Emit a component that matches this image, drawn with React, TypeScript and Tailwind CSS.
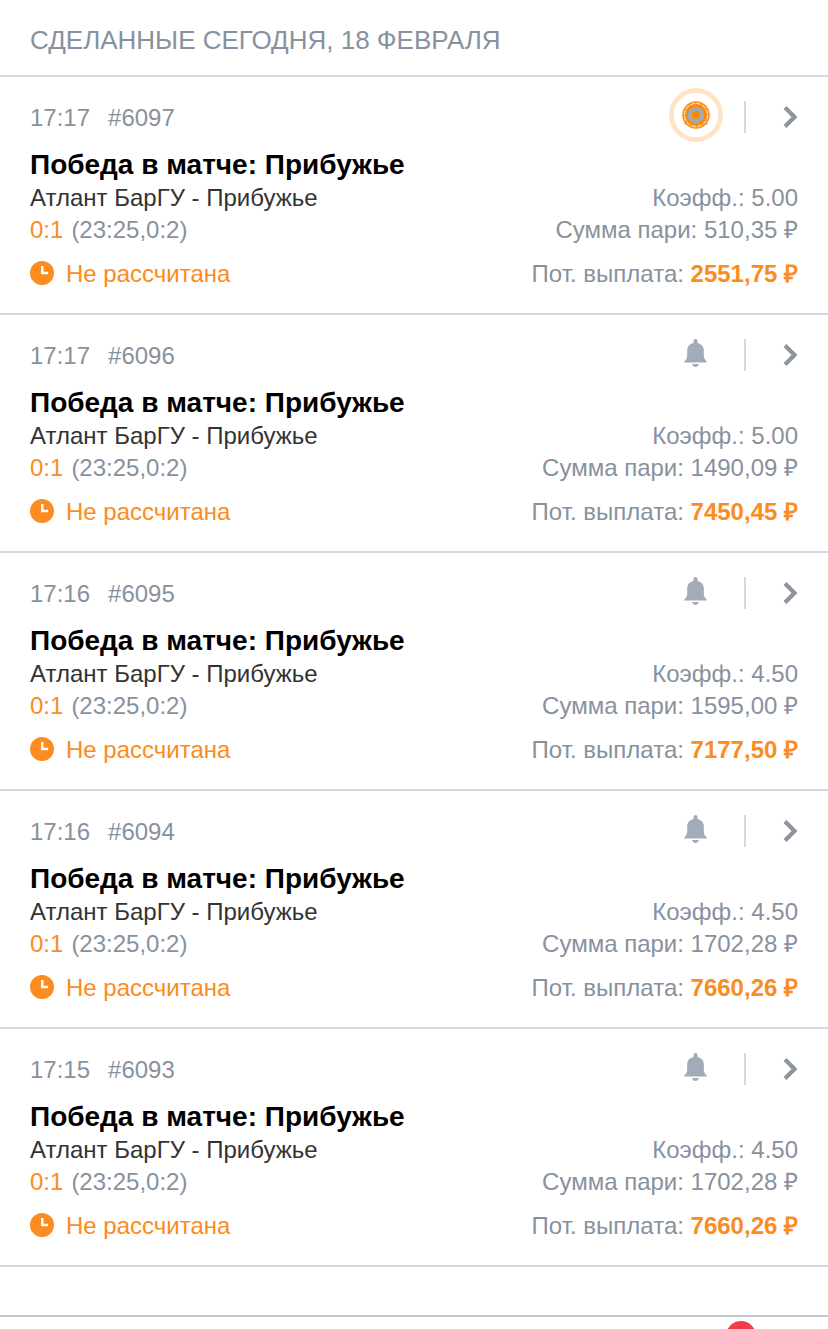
type Bet = {
  time: string;
  id: string;
  odds: string;
  stake: string;
  payout: string;
  live?: boolean;
};

const bets: Bet[] = [
  { time: "17:17", id: "6097", odds: "5.00", stake: "510,35 ₽", payout: "2551,75 ₽", live: true },
  { time: "17:17", id: "6096", odds: "5.00", stake: "1490,09 ₽", payout: "7450,45 ₽" },
  { time: "17:16", id: "6095", odds: "4.50", stake: "1595,00 ₽", payout: "7177,50 ₽" },
  { time: "17:16", id: "6094", odds: "4.50", stake: "1702,28 ₽", payout: "7660,26 ₽" },
  { time: "17:15", id: "6093", odds: "4.50", stake: "1702,28 ₽", payout: "7660,26 ₽" },
];

function BellIcon() {
  return (
    <svg width="24" height="28" viewBox="0 0 24 28" fill="#a3abb8" aria-hidden="true">
      <path d="M11.500 0c1.200 0 2 .8 2 1.900v2c3.800 1 6.300 3.600 6.300 7.100v5.200c0 3 .9 4.600 3 6.200V23.600H.2v-1.200c2.100-1.600 3-3.200 3-6.200V11c0-3.500 2.500-6.100 6.300-7.100v-2C9.500.8 10.300 0 11.500 0z" />
      <path d="M8.200 25h6.600c-.3 1.900-1.600 3-3.300 3s-3-1.100-3.300-3z" />
    </svg>
  );
}

function PulseIcon() {
  return (
    <svg width="54" height="54" viewBox="0 0 54 54" fill="none" aria-hidden="true">
      <circle cx="27" cy="27" r="24.600" stroke="#ffe3c6" strokeWidth="4.600" />
      <path d="M15.500 35.500h5M33.500 35.500h5" stroke="#a3abb8" strokeWidth="2" />
      <circle cx="27" cy="27" r="13.800" fill="#f9951f" />
      <circle cx="27" cy="27" r="11.600" stroke="#fff0dd" strokeWidth="1" strokeDasharray="4.500 1.574" />
      <circle cx="27" cy="27" r="9.200" fill="#a3a9b2" stroke="#f78b12" strokeWidth="2" />
      <circle cx="27" cy="27" r="4.200" fill="#fb8908" />
    </svg>
  );
}

function ChevronIcon() {
  return (
    <svg width="16" height="24" viewBox="0 0 16 24" fill="none" aria-hidden="true">
      <path d="M3 2.500 12.500 12 3 21.500" stroke="#8d949e" strokeWidth="4.200" />
    </svg>
  );
}

function ClockIcon() {
  return (
    <svg width="24" height="24" viewBox="0 0 24 24" fill="none" aria-hidden="true">
      <circle cx="12" cy="12" r="12" fill="#fc8b20" />
      <path d="M12.300 5v7.100h5.900" stroke="#fff" strokeWidth="2.500" />
    </svg>
  );
}

function BetCard({ bet }: { bet: Bet }) {
  return (
    <li className="border-b-2 border-[#d4d8e3] px-[30px] pt-6 pb-[23px]">
      <div className="flex h-[33px] items-end justify-between">
        <div className="flex gap-[18px]">
          <time>{bet.time}</time>
          <span>#{bet.id}</span>
        </div>
        <div className="flex h-8 items-start self-start">
          <button
            type="button"
            aria-label={`Уведомления о пари ${bet.id}`}
            className="relative mr-9 h-7 w-6"
          >
            {bet.live ? (
              <span className="absolute -top-[13px] -left-[15px] block w-[54px]">
                <PulseIcon />
              </span>
            ) : (
              <BellIcon />
            )}
          </button>
          <span className="h-8 w-0.5 bg-[#d4d8e3]" />
          <a href={`#${bet.id}`} aria-label={`Открыть пари ${bet.id}`} className="ml-9 flex h-8 items-center">
            <ChevronIcon />
          </a>
        </div>
      </div>
      <h2 className="mt-3.5 text-[28px] leading-[34px] font-bold text-black">
        Победа в матче: Прибужье
      </h2>
      <div className="flex justify-between">
        <span className="text-[#333333]">Атлант БарГУ - Прибужье</span>
        <span>Коэфф.: {bet.odds}</span>
      </div>
      <div className="flex justify-between">
        <span className="flex gap-2">
          <span className="text-[#fc8b20]">0:1</span>
          <span>(23:25,0:2)</span>
        </span>
        <span>Сумма пари: {bet.stake}</span>
      </div>
      <div className="mt-3 flex justify-between">
        <span className="flex gap-3 text-[#fc8b20]">
          <span className="pt-[3px]">
            <ClockIcon />
          </span>
          Не рассчитана
        </span>
        <span>
          Пот. выплата: <b className="font-bold text-[#fc8b20]">{bet.payout}</b>
        </span>
      </div>
    </li>
  );
}

export default function App() {
  return (
    <div className="bg-white font-['Liberation_Sans',Arial,sans-serif] text-2xl leading-8 text-[#88919e] [&_svg]:block">
      <header className="border-b-2 border-[#d4d8e3] px-[30px] pt-6 pb-[19px]">
        <h1 className="text-[26px]">СДЕЛАННЫЕ СЕГОДНЯ, 18 ФЕВРАЛЯ</h1>
      </header>
      <main>
        <ul>
          {bets.map((bet) => (
            <BetCard key={bet.id} bet={bet} />
          ))}
        </ul>
      </main>
      <footer className="mt-12 flex h-3.5 justify-end overflow-hidden border-t-2 border-[#c8c8ca] pt-1 pr-[72px]">
        <span className="size-[30px] rounded-full bg-[#f03e48]" />
      </footer>
    </div>
  );
}
